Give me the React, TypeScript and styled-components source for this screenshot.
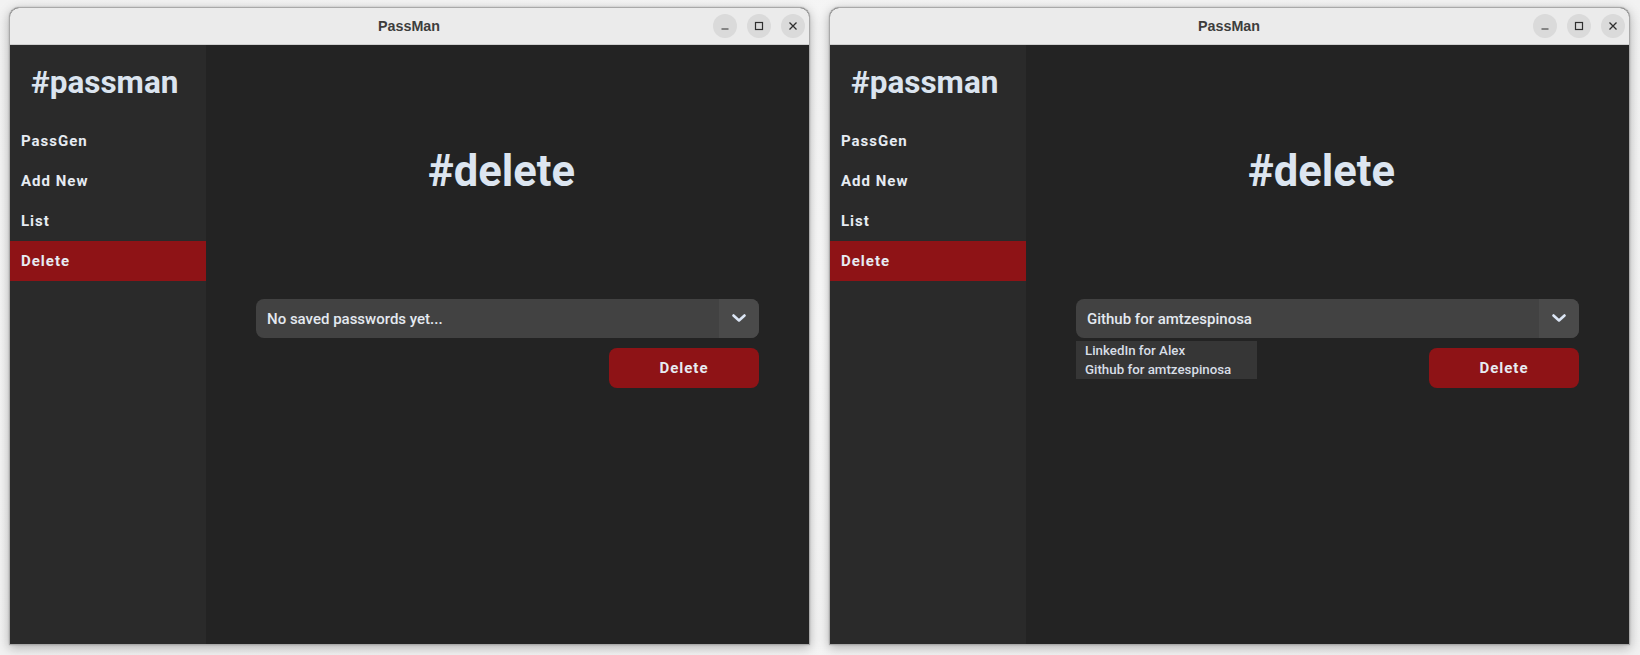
import React from "react";
import styled, { createGlobalStyle } from "styled-components";

const Global = createGlobalStyle`
  html, body { margin: 0; padding: 0; background: #f7f7f7; }
  body { font-family: Roboto, "Noto Sans", "Liberation Sans", sans-serif; }
  * { box-sizing: border-box; }
`;

const Desktop = styled.div`
  display: flex;
  gap: 19px;
  padding: 7px 0 0 9px;
  height: 655px;
  background: radial-gradient(ellipse at center, #fbfbfb 0%, #f2f2f2 100%);
`;

const Window = styled.div`
  width: 801px;
  height: 638px;
  display: flex;
  flex-direction: column;
  border: 1px solid #a9a9a9;
  border-radius: 10px 10px 0 0;
  overflow: hidden;
  box-shadow: 0 3px 12px rgba(0, 0, 0, 0.28), 0 0 2px rgba(0, 0, 0, 0.2);
  background: #232323;
`;

const TitleBar = styled.div`
  height: 37px;
  flex: none;
  display: grid;
  grid-template-columns: 1fr auto 1fr;
  align-items: center;
  background: #ebebeb;
  border-bottom: 1px solid #cfcfcf;
  padding-right: 4px;
`;

const Title = styled.div`
  grid-column: 2;
  font-family: "Liberation Sans", Arial, sans-serif;
  font-weight: 700;
  font-size: 14.3px;
  color: #3d3d3d;
  padding-left: 3px;
`;

const Controls = styled.div`
  grid-column: 3;
  justify-self: end;
  display: flex;
  gap: 10px;
`;

const CtrlButton = styled.div`
  width: 24px;
  height: 24px;
  border-radius: 50%;
  background: #dadada;
  display: flex;
  align-items: center;
  justify-content: center;
  color: #2e2e2e;
`;

const Body = styled.div`
  flex: 1;
  display: flex;
  min-height: 0;
`;

const Sidebar = styled.nav`
  width: 196px;
  flex: none;
  background: #2a2a2a;
  display: flex;
  flex-direction: column;
`;

const Brand = styled.h1`
  margin: 0;
  height: 76px;
  padding: 19px 0 0 21px;
  font-size: 31.5px;
  line-height: 38px;
  font-weight: 700;
  color: #dbe4ef;
`;

const NavItem = styled.div<{ $active?: boolean }>`
  height: 40px;
  display: flex;
  align-items: center;
  padding-left: 11px;
  font-size: 15px;
  font-weight: 700;
  letter-spacing: 1px;
  color: #e6ebf2;
  background: ${(p) => (p.$active ? "#8e1316" : "transparent")};
`;

const Main = styled.main`
  flex: 1;
  display: flex;
  flex-direction: column;
  padding: 102px 50px 0 50px;
`;

const Heading = styled.h2`
  margin: 0 12px 102px 0;
  font-size: 43.5px;
  line-height: 50px;
  font-weight: 700;
  text-align: center;
  color: #dce5f0;
`;

const SelectWrap = styled.div`
  position: relative;
`;

const Select = styled.div`
  height: 39px;
  display: flex;
  border-radius: 8px;
  overflow: hidden;
  background: #424242;
`;

const SelectValue = styled.div`
  flex: 1;
  display: flex;
  align-items: center;
  padding-left: 11px;
  font-size: 15px;
  font-weight: 500;
  color: #e4e9f0;
`;

const Chevron = styled.div`
  width: 40px;
  flex: none;
  display: flex;
  align-items: center;
  justify-content: center;
  background: #4a4a4a;
  color: #dce6f5;
`;

const Menu = styled.ul`
  position: absolute;
  left: 0;
  top: 42px;
  width: 181px;
  margin: 0;
  padding: 0;
  list-style: none;
  background: #363636;
`;

const MenuItem = styled.li`
  height: 19px;
  line-height: 19px;
  padding-left: 9px;
  font-size: 13.3px;
  font-weight: 500;
  color: #d8dee6;
`;

const Actions = styled.div`
  display: flex;
  justify-content: flex-end;
  margin-top: 10px;
`;

const DeleteButton = styled.button`
  width: 150px;
  height: 40px;
  border: none;
  border-radius: 8px;
  background: #8e1316;
  color: #e6ebf2;
  font-family: inherit;
  font-size: 15px;
  font-weight: 700;
  letter-spacing: 1px;
`;

const ChevronIcon = () => (
  <svg width="14" height="9" viewBox="0 0 14 9">
    <polyline
      points="1.5,1.5 7,6.5 12.5,1.5"
      fill="none"
      stroke="currentColor"
      strokeWidth="2.6"
      strokeLinecap="round"
      strokeLinejoin="round"
    />
  </svg>
);

const MinIcon = () => (
  <svg width="10" height="10" viewBox="0 0 10 10">
    <line x1="1.5" y1="8" x2="8.5" y2="8" stroke="currentColor" strokeWidth="1.2" />
  </svg>
);
const MaxIcon = () => (
  <svg width="10" height="10" viewBox="0 0 10 10">
    <rect x="1.5" y="1.5" width="7" height="7" fill="none" stroke="currentColor" strokeWidth="1.2" />
  </svg>
);
const CloseIcon = () => (
  <svg width="10" height="10" viewBox="0 0 10 10">
    <path d="M1.5 1.5 L8.5 8.5 M8.5 1.5 L1.5 8.5" stroke="currentColor" strokeWidth="1.3" />
  </svg>
);

const navItems = ["PassGen", "Add New", "List", "Delete"];

const AppWindow: React.FC<{ value: string; options?: string[] }> = ({ value, options }) => (
  <Window>
    <TitleBar>
      <Title>PassMan</Title>
      <Controls>
        <CtrlButton><MinIcon /></CtrlButton>
        <CtrlButton><MaxIcon /></CtrlButton>
        <CtrlButton><CloseIcon /></CtrlButton>
      </Controls>
    </TitleBar>
    <Body>
      <Sidebar>
        <Brand>#passman</Brand>
        {navItems.map((n) => (
          <NavItem key={n} $active={n === "Delete"}>{n}</NavItem>
        ))}
      </Sidebar>
      <Main>
        <Heading>#delete</Heading>
        <SelectWrap>
          <Select>
            <SelectValue>{value}</SelectValue>
            <Chevron><ChevronIcon /></Chevron>
          </Select>
          {options && (
            <Menu>
              {options.map((o) => (
                <MenuItem key={o}>{o}</MenuItem>
              ))}
            </Menu>
          )}
        </SelectWrap>
        <Actions>
          <DeleteButton>Delete</DeleteButton>
        </Actions>
      </Main>
    </Body>
  </Window>
);

export default function App() {
  return (
    <>
      <Global />
      <Desktop>
        <AppWindow value="No saved passwords yet..." />
        <AppWindow
          value="Github for amtzespinosa"
          options={["LinkedIn for Alex", "Github for amtzespinosa"]}
        />
      </Desktop>
    </>
  );
}
